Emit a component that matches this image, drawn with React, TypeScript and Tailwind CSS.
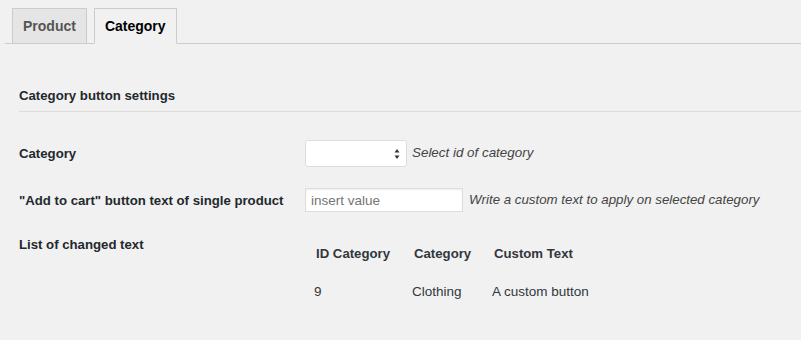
import React from 'react';

const rows = [{ id: '9', category: 'Clothing', text: 'A custom button' }];

const SortArrows = () => (
  <svg width="6" height="10" viewBox="0 0 6 10" className="absolute right-[6px] top-[8px]">
    <path d="M3 0 L5.5 3.5 L0.5 3.5 Z" fill="#32373c" />
    <path d="M0.5 6.5 L5.5 6.5 L3 10 Z" fill="#32373c" />
  </svg>
);

export default function App() {
  return (
    <div
      className="w-[801px] h-[340px] bg-[#f1f1f1] text-[#23282d] overflow-hidden"
      style={{ fontFamily: '"Liberation Sans", Arial, sans-serif' }}
    >
      {/* tabs */}
      <div className="mt-[8px] ml-[5px] flex gap-[7px] pl-[7px] border-b border-[#ccc]">
        <button className="-mb-px h-[36px] px-[10px] border border-[#ccc] bg-[#e5e5e5] text-[#555] text-[14px] font-bold leading-[20px]">
          Product
        </button>
        <button className="-mb-px h-[36px] px-[10px] border border-[#ccc] border-b-[#f1f1f1] bg-[#f1f1f1] text-black text-[14px] font-bold leading-[20px]">
          Category
        </button>
      </div>

      <div className="pl-[19px]">
        <h2 className="mt-[42px] pb-[5px] border-b border-[#dcdcdc] text-[13.2px] font-bold leading-[20px]">
          Category button settings
        </h2>

        {/* category select */}
        <div className="mt-[28px] flex items-center h-[27px]">
          <div className="w-[286px] text-[13.2px] font-bold leading-[20px]">Category</div>
          <div className="relative w-[102px] h-[27px] rounded-[3px] border border-[#ddd] bg-white">
            <SortArrows />
          </div>
          <span className="ml-[5px] italic text-[13.4px] text-[#444]">Select id of category</span>
        </div>

        {/* button text input */}
        <div className="mt-[21px] flex items-center h-[24px]">
          <div className="w-[286px] text-[13.2px] font-bold leading-[20px] pt-[1px]">
            "Add to cart" button text of single product
          </div>
          <input
            placeholder="insert value"
            className="w-[158px] h-[24px] border border-[#ddd] bg-white px-[5px] text-[13.5px] placeholder:text-[#757575] outline-none shadow-[inset_0_1px_2px_rgba(0,0,0,0.07)]"
          />
          <span className="ml-[6px] italic text-[13.3px] text-[#444]">
            Write a custom text to apply on selected category
          </span>
        </div>

        {/* list */}
        <div className="mt-[23px] flex items-start">
          <div className="w-[287px] text-[13.2px] font-bold leading-[20px]">List of changed text</div>
          <div className="grid grid-cols-[98px_80px_auto] text-[#32373c]">
            <div className="pl-[10px] pt-[9px] pb-[9px] text-[13.2px] font-bold leading-[20px]">ID Category</div>
            <div className="pl-[10px] pt-[9px] pb-[9px] text-[13.2px] font-bold leading-[20px]">Category</div>
            <div className="pl-[10px] pt-[9px] pb-[9px] text-[13.2px] font-bold leading-[20px]">Custom Text</div>
            {rows.map((r) => (
              <React.Fragment key={r.id}>
                <div className="pl-[8px] pt-[9px] text-[13.5px] leading-[20px]">{r.id}</div>
                <div className="pl-[8px] pt-[9px] text-[13.5px] leading-[20px]">{r.category}</div>
                <div className="pl-[8px] pt-[9px] text-[13.5px] leading-[20px]">{r.text}</div>
              </React.Fragment>
            ))}
          </div>
        </div>
      </div>
    </div>
  );
}
